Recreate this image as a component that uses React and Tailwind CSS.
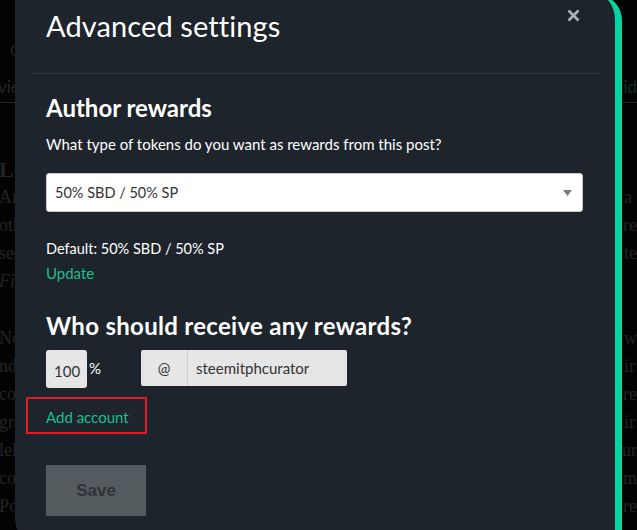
import React from "react";

function BgRow({ left, right, cls = "", rightCls = "" }) {
  return (
    <div className={`flex h-[28px] items-center whitespace-nowrap ${cls}`}>
      <div className="w-[624px] overflow-hidden">
        <span className="-ml-[1px] inline-block">{left}</span>
      </div>
      <span className={rightCls}>{right}</span>
    </div>
  );
}

export default function App() {
  return (
    <div className="relative h-[530px] w-[637px] overflow-hidden bg-[#030303]">
      {/* page behind the modal */}
      <div className="absolute inset-0 text-[18px] text-[#232323] [font-family:'Liberation_Serif',serif]">
        <div className="h-[40px]" />
        <div className="flex h-[20px] items-center pl-[10px] text-[15px] text-[#222] [font-family:Lato,sans-serif]">
          C
        </div>
        <div className="h-[16px]" />
        <div className="flex h-[22px] items-center whitespace-nowrap text-[17px] [font-family:Lato,sans-serif]">
          <div className="w-[624px] overflow-hidden">
            <span className="-ml-[2px] inline-block text-[#262626]">view</span>
          </div>
          <span className="text-[#0a3129]">uid</span>
        </div>
        <div className="h-[5px] border-b border-[#262626]" />
        <div className="h-[52px]" />
        <BgRow left="LOS" right="" cls="font-bold text-[22px]" />
        <BgRow left="Another" right="a" />
        <BgRow left="other" right="re" />
        <BgRow left="seen" right="te" />
        <BgRow left="Film" right="" cls="italic" />
        <div className="h-[29px]" />
        <BgRow left="Now" right="w" />
        <BgRow left="ndo" right="ir" />
        <BgRow left="com" right="re" />
        <BgRow left="grap" right="ir" />
        <BgRow left="lel" right="ur" />
        <BgRow left="com" right="m" />
        <BgRow left="Pos" right="re" />
      </div>

      {/* modal */}
      <div className="absolute left-[15px] top-[-5px] h-[552px] w-[607px] rounded-tr-[25px] rounded-bl-[28px] border-r-[7px] border-[#07d4a0] bg-[#1e242b] px-[16px] [font-family:Lato,'Noto_Sans',sans-serif]">
        <button className="absolute right-[35px] top-[14px] flex h-[13px] w-[13px] items-center justify-center">
          <svg width="13" height="13" viewBox="0 0 13 13">
            <path d="M1.5 1.5 L11.5 11.5 M11.5 1.5 L1.5 11.5" stroke="#aab4be" strokeWidth="2.6" strokeLinecap="butt" />
          </svg>
        </button>

        <div className="h-[79px] border-b border-[#2f3841] pl-[15px] pt-[13px]">
          <h2 className="text-[29px] leading-[36px] tracking-[0.1px] text-white">Advanced settings</h2>
        </div>

        <div className="pl-[15px] pr-[16px]">
          <h3 className="mt-[19px] text-[24px] font-bold leading-[30px] text-white">Author rewards</h3>
          <p className="mt-[10px] text-[15px] leading-[22px] text-white">
            What type of tokens do you want as rewards from this post?
          </p>
          <div className="mt-[18px] flex h-[39px] items-center justify-between rounded-[3px] border border-[#cacaca] bg-white pl-[8px] pr-[10px]">
            <span className="text-[14.5px] text-[#333]">50% SBD / 50% SP</span>
            <svg width="9" height="6" viewBox="0 0 9 6">
              <path d="M0 0 L9 0 L4.5 6 Z" fill="#7a7a7a" />
            </svg>
          </div>
          <p className="mt-[26px] text-[14.5px] leading-[22px] text-white">Default: 50% SBD / 50% SP</p>
          <p className="mt-[2px] text-[15px] leading-[22px] text-[#1cbf8f]">Update</p>

          <h3 className="mt-[27px] text-[24px] font-bold leading-[30px] tracking-[0.3px] text-white">
            Who should receive any rewards?
          </h3>

          <div className="mt-[9px] flex items-start">
            <div className="flex h-[38px] w-[41px] items-end rounded-[3px] bg-[#e6e6e6] pb-[8px] pl-[8px] text-[15px] leading-[18px] text-[#333]">
              100
            </div>
            <span className="ml-[2px] mt-[9px] text-[15px] leading-[18px] text-white">%</span>
            <div className="ml-[40px] flex h-[36px] overflow-hidden rounded-[2px] bg-[#e6e6e6] text-[15px] text-[#333]">
              <div className="flex w-[47px] items-center justify-center border-r border-[#cfcfcf]">@</div>
              <div className="flex w-[159px] items-center pl-[8px]">steemitphcurator</div>
            </div>
          </div>

          <div className="-ml-[20px] mt-[9px] h-[37px] w-[121px] border-2 border-[#e51b23] pl-[18px] pt-[6px]">
            <span className="text-[15px] leading-[22px] text-[#1cbf8f]">Add account</span>
          </div>

          <button className="mt-[31px] flex h-[51px] w-[100px] items-center justify-center bg-[#545b5f] text-[17px] font-bold text-[#2d3337] [font-family:'Liberation_Sans',Arial,sans-serif]">
            Save
          </button>
        </div>
      </div>
    </div>
  );
}
